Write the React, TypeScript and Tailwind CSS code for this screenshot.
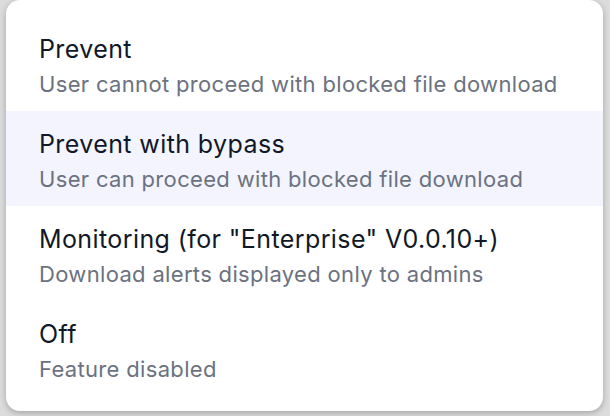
const options = [
  { title: "Prevent", desc: "User cannot proceed with blocked file download" },
  { title: "Prevent with bypass", desc: "User can proceed with blocked file download", active: true },
  { title: 'Monitoring (for "Enterprise" V0.0.10+)', desc: "Download alerts displayed only to admins" },
  { title: "Off", desc: "Feature disabled" },
];

export default function App() {
  return (
    <div className="w-[610px] h-[416px] bg-[#dcdcdc] pl-[6px] pr-[7px] pb-[5px] overflow-hidden" style={{ fontFamily: "Inter, 'Noto Sans', sans-serif" }}>
      <div className="h-full bg-white rounded-[14px] pt-[16px] pb-[15px] shadow-[0_2px_6px_rgba(0,0,0,0.25)]">
        {options.map((o) => (
          <div key={o.title} className={`h-[95px] pl-[33px] pr-4 pt-[16px] ${o.active ? "bg-[#f3f4fe]" : ""}`}>
            <div className="text-[25px] leading-[34px] tracking-[0.4px] text-[#111827]">{o.title}</div>
            <div className="mt-[3px] text-[22px] leading-[30px] tracking-[0.33px] text-[#6b7280]">{o.desc}</div>
          </div>
        ))}
      </div>
    </div>
  );
}
